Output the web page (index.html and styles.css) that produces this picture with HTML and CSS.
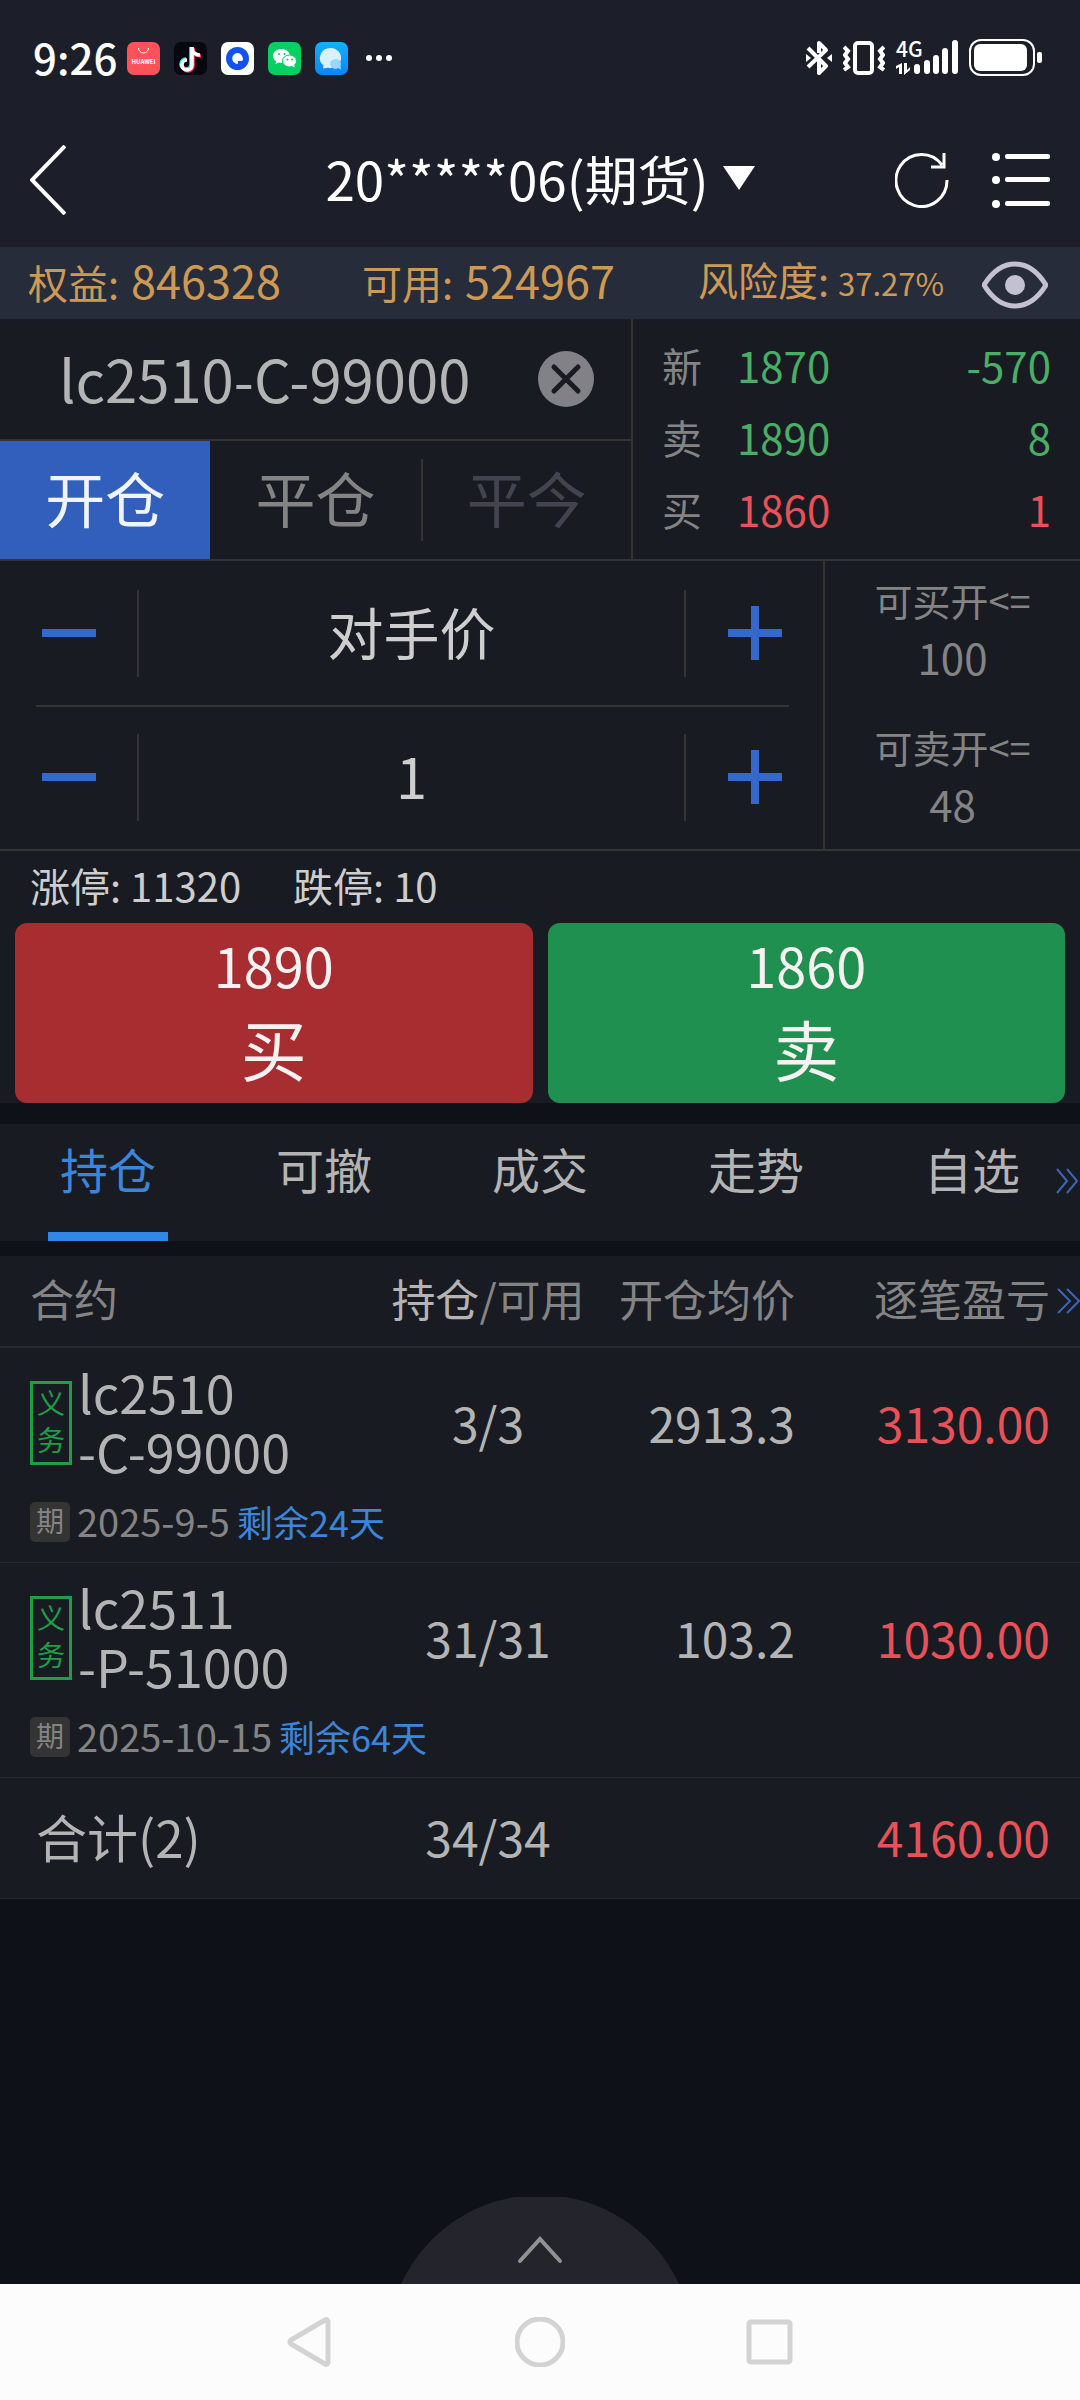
FILE: index.html
```html
<!DOCTYPE html>
<html lang="zh-CN">
<head>
<meta charset="utf-8">
<meta name="viewport" content="width=device-width, initial-scale=1">
<title>期货交易</title>
<link rel="stylesheet" href="styles.css">
</head>
<body>
<div class="status">
  <div class="status-left">
    <span class="clock">9:26</span>
    <svg class="app" viewBox="0 0 33 33"><rect width="33" height="33" rx="7" fill="#fd5257"/><path d="M11.500 6a5 5 0 0 0 10 0" fill="none" stroke="#fff" stroke-width="1"/><text x="16.500" y="22" text-anchor="middle" font-size="6" font-weight="700" fill="#fff">HUAWEI</text></svg>
    <svg class="app" viewBox="0 0 33 33"><rect width="33" height="33" rx="7" fill="#07080f"/><g fill="none" stroke-width="3.600"><path d="M17 5v17a5 5 0 1 1-5-5M17 5c0 5 4 8 8 8" stroke="#25f4ee"/><path d="M19 7v17a5 5 0 0 1-10 0M19 6c0 5 4 8 8 8" stroke="#fe2c55"/><path d="M18 5v18a5 5 0 1 1-5-5M18 5c0 5 3 8 8 8" stroke="#fff"/></g></svg>
    <svg class="app" viewBox="0 0 33 33"><rect width="33" height="33" rx="7" fill="#fff"/><circle cx="16.500" cy="16.500" r="11.500" fill="#1452f0"/><path d="M16.500 11a5.500 5.500 0 1 0 .5 11v-3h3c2 0 2.500-1.500 1.500-4s-3-4-5-4z" fill="#fff"/></svg>
    <svg class="app" viewBox="0 0 33 33"><rect width="33" height="33" rx="7" fill="#07cf63"/><path d="M13.500 7c-5 0-8.500 3.200-8.500 7 0 2.300 1.200 4.200 3.200 5.500L7.500 22l3-1.500q1.500.5 4 .4A6.500 6.500 0 0 1 22 13.200C21.200 9.500 17.700 7 13.500 7z" fill="#fff"/><ellipse cx="21.500" cy="19" rx="7" ry="6" fill="#fff" stroke="#07cf63"/><path d="m24 24 2.500 1.500V23z" fill="#fff"/><g fill="#07cf63"><circle cx="11" cy="12" r="1"/><circle cx="16.500" cy="12" r="1"/><circle cx="19.500" cy="17.500" r="1"/><circle cx="24" cy="17.500" r="1"/></g></svg>
    <svg class="app" viewBox="0 0 33 33"><defs><linearGradient id="msg" x2="0" y2="1"><stop stop-color="#10b1ff"/><stop offset="1" stop-color="#0a86fb"/></linearGradient></defs><rect width="33" height="33" rx="7" fill="url(#msg)"/><path d="M15.500 6a10.500 10 0 0 0-7 17.500L8 26.500l5-.8A10.500 10 0 1 0 15.500 6z" fill="#d9f1ff"/><path d="M21 17a5 5 0 0 1 4.500 7l.5 3.500-3-1.500a5 5 0 1 1-2-9z" fill="#9ad6ff"/></svg>
    <svg class="more" viewBox="0 0 26 8" fill="#fff"><circle cx="3" cy="4" r="3"/><circle cx="13" cy="4" r="3"/><circle cx="23" cy="4" r="3"/></svg>
  </div>
  <div class="status-right">
    <svg width="26" height="36" viewBox="0 0 26 36" fill="none" stroke="#fff" stroke-width="4"><path d="m2 8 18 18-7 7V20M2 27 20 10l-7-7v10" stroke-linejoin="round"/><path d="m0 14 5 4-5 4zM26 14l-5 4 5 4z" fill="#fff" stroke="none"/></svg>
    <svg width="42" height="36" viewBox="0 0 42 36" fill="none" stroke="#fff"><rect x="12" y="3" width="17" height="30" rx="3" stroke-width="4"/><path d="m1 7 4 4-3 4 3 4-3 4 3 4-4 3M41 7l-4 4 3 4-3 4 3 4-3 4 4 3" stroke-width="4"/></svg>
    <svg class="signal" width="62" height="36" viewBox="0 0 62 36" fill="#fff"><text x="0" y="17" font-size="21" font-weight="500">4G</text><path d="M3 34V27L0 29v-3l6-3v11zM8 23h3v7l3-3v3l-6 5z"/><rect x="18" y="24" width="6" height="10" rx="3"/><rect x="28" y="20" width="6" height="14" rx="3"/><rect x="37" y="15" width="6" height="19" rx="3"/><rect x="46" y="8" width="6" height="26" rx="3"/><rect x="56" y="0" width="6" height="34" rx="3"/></svg>
    <svg width="73" height="38" viewBox="0 0 73 38"><rect x="1" y="1" width="64" height="35" rx="11" fill="none" stroke="#fff" stroke-width="2"/><rect x="5" y="5" width="53" height="27" rx="6" fill="#fff"/><rect x="68" y="13" width="5" height="11" rx="2" fill="#fff"/></svg>
  </div>
</div>

<header class="titlebar">
  <button class="icon-btn" aria-label="返回"><svg width="36" height="70" viewBox="0 0 36 70" fill="none" stroke="#fff" stroke-width="4"><path d="M35 1 2 35l33 34"/></svg></button>
  <button class="account-pick">20*****06(期货)<svg width="32" height="24" viewBox="0 0 32 24"><path d="M0 0h32L16 24z" fill="#fff"/></svg></button>
  <div class="title-actions">
    <button class="icon-btn" aria-label="刷新"><svg width="54" height="56" viewBox="0 0 54 56" fill="none" stroke="#fff" stroke-width="3"><path d="M52 28A25.500 26 0 1 1 47 13M49 1v14H36"/></svg></button>
    <button class="icon-btn" aria-label="菜单"><svg width="58" height="56" viewBox="0 0 58 56" fill="#fff"><circle cx="4" cy="5" r="4"/><circle cx="4" cy="28" r="4"/><circle cx="4" cy="52" r="4"/><rect x="13" y="2" width="45" height="5" rx="2"/><rect x="13" y="25" width="45" height="5" rx="2"/><rect x="13" y="49" width="45" height="5" rx="2"/></svg></button>
  </div>
</header>

<section class="funds">
  <div>权益: <b class="amount">846328</b></div>
  <div>可用: <b class="amount">524967</b></div>
  <div>风险度: <b class="risk">37.27%</b></div>
  <button class="icon-btn" aria-label="显示资金"><svg width="66" height="48" viewBox="0 0 66 48"><path d="M2 24Q15 3 33 3t31 21Q51 45 33 45T2 24z" fill="none" stroke="#c3c0d2" stroke-width="5"/><circle cx="33" cy="24" r="10" fill="#c3c0d2"/></svg></button>
</section>

<main>
<section class="quote">
  <div class="quote-left">
    <div class="symbol">
      <input class="symbol-input" aria-label="合约代码" value="lc2510-C-99000">
      <button class="icon-btn" aria-label="清除"><svg width="58" height="58" viewBox="0 0 58 58"><circle cx="29" cy="29" r="28" fill="#828187"/><path d="m17 17 24 24M41 17 17 41" stroke="#191b23" stroke-width="5" stroke-linecap="round"/></svg></button>
    </div>
    <div class="sides">
      <button class="side side-on">开仓</button>
      <button class="side">平仓</button>
      <button class="side side-off">平今</button>
    </div>
  </div>
  <dl class="ticks">
    <div class="tick up"><dt>新</dt><dd>1870</dd><dd>-570</dd></div>
    <div class="tick up"><dt>卖</dt><dd>1890</dd><dd>8</dd></div>
    <div class="tick down"><dt>买</dt><dd>1860</dd><dd>1</dd></div>
  </dl>
</section>

<section class="order">
  <div class="steppers">
    <div class="stepper">
      <button class="step" aria-label="降低价格"><svg width="54" height="54"><path d="M0 23h54v8H0z"/></svg></button>
      <input class="step-value" aria-label="价格" value="对手价">
      <button class="step" aria-label="提高价格"><svg width="54" height="54"><path d="M0 23h54v8H0zM23 0h8v54h-8z"/></svg></button>
    </div>
    <div class="stepper">
      <button class="step" aria-label="减少手数"><svg width="54" height="54"><path d="M0 23h54v8H0z"/></svg></button>
      <input class="step-value" aria-label="手数" value="1">
      <button class="step" aria-label="增加手数"><svg width="54" height="54"><path d="M0 23h54v8H0zM23 0h8v54h-8z"/></svg></button>
    </div>
  </div>
  <dl class="limits">
    <div><dt>可买开&lt;=</dt><dd>100</dd></div>
    <div><dt>可卖开&lt;=</dt><dd>48</dd></div>
  </dl>
</section>

<section class="trade">
  <p class="stops"><span>涨停: 11320</span><span>跌停: 10</span></p>
  <div class="trade-buttons">
    <button class="trade-btn buy"><span class="price">1890</span><span class="action">买</span></button>
    <button class="trade-btn sell"><span class="price">1860</span><span class="action">卖</span></button>
  </div>
</section>

<nav class="tabs">
  <a class="tab tab-on" href="#hold">持仓</a>
  <a class="tab" href="#pending">可撤</a>
  <a class="tab" href="#deals">成交</a>
  <a class="tab" href="#trend">走势</a>
  <a class="tab" href="#favourites">自选</a>
  <svg class="next" width="23" height="26" viewBox="0 0 23 26"><path d="m1 1 10 12L1 25M11 1l10 12-10 12"/></svg>
</nav>

<section class="holdings" id="hold">
  <svg class="next" width="23" height="26" viewBox="0 0 23 26"><path d="m1 1 12 12L1 25M10 1l12 12-12 12"/></svg>
  <table>
    <thead>
      <tr><th>合约</th><th><em>持仓</em>/可用</th><th>开仓均价</th><th>逐笔盈亏</th></tr>
    </thead>
    <tbody>
      <tr>
        <td><div class="contract"><span class="duty"><span>义</span><span>务</span></span><span>lc2510<br>-C-99000</span></div>
          <div class="expiry"><span class="expiry-tag">期</span><time>2025-9-5</time><span class="remain">剩余24天</span></div></td>
        <td>3/3</td><td>2913.3</td><td class="profit">3130.00</td>
      </tr>
      <tr>
        <td><div class="contract"><span class="duty"><span>义</span><span>务</span></span><span>lc2511<br>-P-51000</span></div>
          <div class="expiry"><span class="expiry-tag">期</span><time>2025-10-15</time><span class="remain">剩余64天</span></div></td>
        <td>31/31</td><td>103.2</td><td class="profit">1030.00</td>
      </tr>
    </tbody>
    <tfoot>
      <tr><td>合计(2)</td><td>34/34</td><td></td><td class="profit">4160.00</td></tr>
    </tfoot>
  </table>
</section>
</main>

<div class="drawer">
  <button class="handle" aria-label="展开"><svg width="278" height="87" viewBox="0 0 278 87"><path d="M0 87a153 153 0 0 1 278 0z" fill="#24242c"/><path d="m119 64 20-22 20 22" fill="none" stroke="#929292" stroke-width="4" stroke-linecap="round"/></svg></button>
</div>

<footer class="sysnav">
  <button class="icon-btn" aria-label="后退"><svg width="50" height="50" viewBox="0 0 50 50"><path d="M43 4v42q-1 2-3 1L6 27q-2-2 0-4L40 3q2-1 3 1z"/></svg></button>
  <button class="icon-btn" aria-label="主屏幕"><svg width="50" height="50" viewBox="0 0 50 50"><circle cx="25" cy="25" r="23"/></svg></button>
  <button class="icon-btn" aria-label="最近任务"><svg width="50" height="50" viewBox="0 0 50 50"><rect x="4" y="5" width="41" height="40" rx="2"/></svg></button>
</footer>
</body>
</html>
```
FILE: styles.css
```css
* { box-sizing: border-box; }

body {
  margin: 0;
  min-height: 100vh;
  display: flex;
  flex-direction: column;
  background: #0e1118;
  color: #b4b4b4;
  font-family: "Noto Sans CJK SC", sans-serif;
  font-size: 48px;
}

button, input {
  margin: 0;
  padding: 0;
  border: 0;
  border-radius: 0;
  background: none;
  color: inherit;
  font: inherit;
}

svg { display: block; }
dl, dd, p { margin: 0; }
a { text-decoration: none; color: inherit; }

.icon-btn { display: block; flex: none; }

/* system status */
.status {
  height: 116px;
  padding: 0 38px 0 33px;
  display: flex;
  align-items: center;
  justify-content: space-between;
  background: #1c1f29;
  color: #fff;
}
.status-left { display: flex; align-items: center; gap: 14px; }
.clock { width: 80px; margin-bottom: 4px; font-size: 42px; font-weight: 500; white-space: nowrap; }
.app { width: 33px; height: 33px; }
.more { width: 26px; height: 8px; margin-left: 4px; }
.status-right { display: flex; align-items: center; gap: 11px; }
.signal { overflow: visible; }

/* title */
.titlebar {
  height: 131px;
  padding: 0 30px 4px;
  display: grid;
  grid-template-columns: 1fr auto 1fr;
  align-items: center;
  background: #1c1f29;
  color: #fff;
}
.account-pick {
  display: flex;
  align-items: center;
  gap: 14px;
  padding-bottom: 4px;
  font-size: 53px;
  line-height: 72px;
}
.title-actions { display: flex; justify-content: flex-end; gap: 43px; }

/* funds */
.funds {
  height: 72px;
  padding: 0 32px 0 28px;
  display: grid;
  grid-template-columns: 334fr 336fr 284fr auto;
  align-items: center;
  background: #272c3a;
  color: #cd9a56;
  font-size: 40px;
  line-height: 64px;
  white-space: nowrap;
}
.funds div { padding-bottom: 8px; }
.funds b { font-weight: 400; }
.amount { margin-left: 3px; font-size: 45px; }
.risk { font-size: 31px; }

main { background: #191b23; }

/* symbol and quote */
.quote {
  display: grid;
  grid-template-columns: minmax(0, 633fr) minmax(0, 447fr);
  border-bottom: 2px solid #343434;
}
.quote-left { border-right: 2px solid #343434; }
.symbol {
  height: 122px;
  padding: 0 36px 0 59px;
  display: flex;
  align-items: center;
  justify-content: space-between;
  border-bottom: 2px solid #343434;
}
.symbol-input { flex: 1; min-width: 0; height: 84px; padding-bottom: 3px; font-size: 58px; }
.sides { height: 118px; display: grid; grid-template-columns: 1fr 1fr 1fr; align-items: center; }
.side { height: 82px; font-size: 60px; line-height: 76px; padding-bottom: 6px; color: #848484; }
.side-on { height: 118px; background: #315fbb; color: #f0f4ff; }
.side-off { border-left: 2px solid #343434; color: #434450; }

.ticks { padding: 12px 29px; }
.tick {
  display: grid;
  grid-template-columns: 75px 1fr auto;
  height: 72px;
  line-height: 68px;
  font-size: 42px;
}
.tick dt { color: #848484; font-size: 40px; }
.up { color: #49ae66; }
.down { color: #e85157; }

/* order entry */
.order {
  display: grid;
  grid-template-columns: 823fr 257fr;
  border-bottom: 2px solid #343434;
}
.stepper {
  height: 144px;
  display: grid;
  grid-template-columns: 137px 1fr 137px;
  align-items: center;
}
.stepper + .stepper { position: relative; }
.stepper + .stepper::before {
  content: "";
  position: absolute;
  inset: 0 34px auto 36px;
  height: 2px;
  background: #343434;
}
.step { display: grid; place-items: center; height: 100%; }
.step path { fill: #3568cc; }
.step-value {
  width: 100%;
  height: 87px;
  padding-bottom: 6px;
  border: solid #343434;
  border-width: 0 2px;
  color: #cecece;
  font-size: 56px;
  text-align: center;
}
.limits {
  display: flex;
  flex-direction: column;
  justify-content: center;
  gap: 33px;
  padding-bottom: 7px;
  border-left: 2px solid #343434;
  color: #848484;
  font-size: 42px;
  line-height: 57px;
  text-align: center;
}
.limits dt { font-size: 38px; }

/* buy and sell */
.stops {
  height: 72px;
  padding: 0 30px;
  display: flex;
  gap: 52px;
  color: #cecece;
  font-size: 40px;
  line-height: 68px;
}
.trade-buttons { display: grid; grid-template-columns: 1fr 1fr; gap: 15px; padding: 0 15px; }
.trade-btn {
  height: 180px;
  padding-bottom: 14px;
  display: flex;
  flex-direction: column;
  align-items: center;
  justify-content: center;
  border-radius: 12px;
  color: #f6f2f2;
  line-height: 83px;
}
.buy { background: #a72d31; }
.sell { background: #209051; }
.price { font-size: 54px; }
.action { font-size: 66px; }

/* tabs */
.tabs {
  position: relative;
  box-sizing: content-box;
  height: 117px;
  display: grid;
  grid-template-columns: repeat(5, 1fr);
  justify-items: center;
  border-top: 21px solid #0e1118;
}
.tab { width: 120px; line-height: 88px; text-align: center; }
.tab-on { border-bottom: 9px solid #3186e6; color: #3b86da; }
.next { position: absolute; right: 1px; top: 44px; }
.next path { fill: none; stroke: #3b66b8; stroke-width: 2; }

/* holdings */
.holdings { position: relative; border-top: 15px solid #0e1118; }
.holdings .next { top: 32px; right: 0; }
table { width: 100%; table-layout: fixed; border-spacing: 0; }
th {
  height: 92px;
  padding: 0 0 6px;
  border-bottom: 2px solid #262931;
  color: #848484;
  font-size: 44px;
  font-weight: 400;
  line-height: 82px;
  white-space: nowrap;
}
th em { color: #b4b4b4; font-style: normal; }
th:nth-child(1) { width: 35%; }
th:nth-child(2), th:nth-child(3) { width: 20%; }
td { padding: 0; border-bottom: 1px solid #262931; line-height: 60px; white-space: nowrap; }
tbody td { vertical-align: top; padding-top: 44px; }
tr > :nth-child(1) { padding-left: 30px; text-align: left; }
tr > :nth-child(2) { padding-left: 4px; text-align: center; }
tr > :nth-child(3) { padding-right: 15px; text-align: right; }
tr > :nth-child(4) { padding-right: 30px; text-align: right; }
tbody tr > :nth-child(1) { padding-top: 14px; padding-bottom: 20px; }
td.profit { color: #e85157; }
tfoot td { height: 121px; padding-bottom: 4px; }
tfoot tr > :nth-child(1) { padding-left: 36px; font-size: 51px; }

.contract { display: flex; gap: 6px; font-size: 52px; line-height: 59px; }
.duty {
  flex: none;
  width: 42px;
  height: 84px;
  margin-top: 19px;
  display: flex;
  flex-direction: column;
  align-items: center;
  border: 3px solid #1e9e48;
  color: #1e9e48;
  font-size: 28px;
  line-height: 37px;
}
.expiry {
  margin-top: 22px;
  height: 40px;
  display: flex;
  align-items: center;
  gap: 7px;
  color: #848484;
  font-size: 36px;
  line-height: 36px;
}
.expiry time { font-size: 38px; }
.expiry time, .remain { margin-bottom: 2px; }
.expiry-tag {
  flex: none;
  width: 40px;
  height: 40px;
  border-radius: 5px;
  background: #343434;
  font-size: 28px;
  line-height: 37px;
  text-align: center;
}
.remain { color: #3b86da; }

/* bottom drawer handle */
.drawer { flex: 1; display: flex; align-items: flex-end; justify-content: center; }
.handle { display: block; }

.sysnav {
  height: 116px;
  display: flex;
  align-items: center;
  justify-content: center;
  gap: 180px;
  background: #fcfcfc;
}
.sysnav svg { fill: none; stroke: #d3d3d3; stroke-width: 5; }
```
